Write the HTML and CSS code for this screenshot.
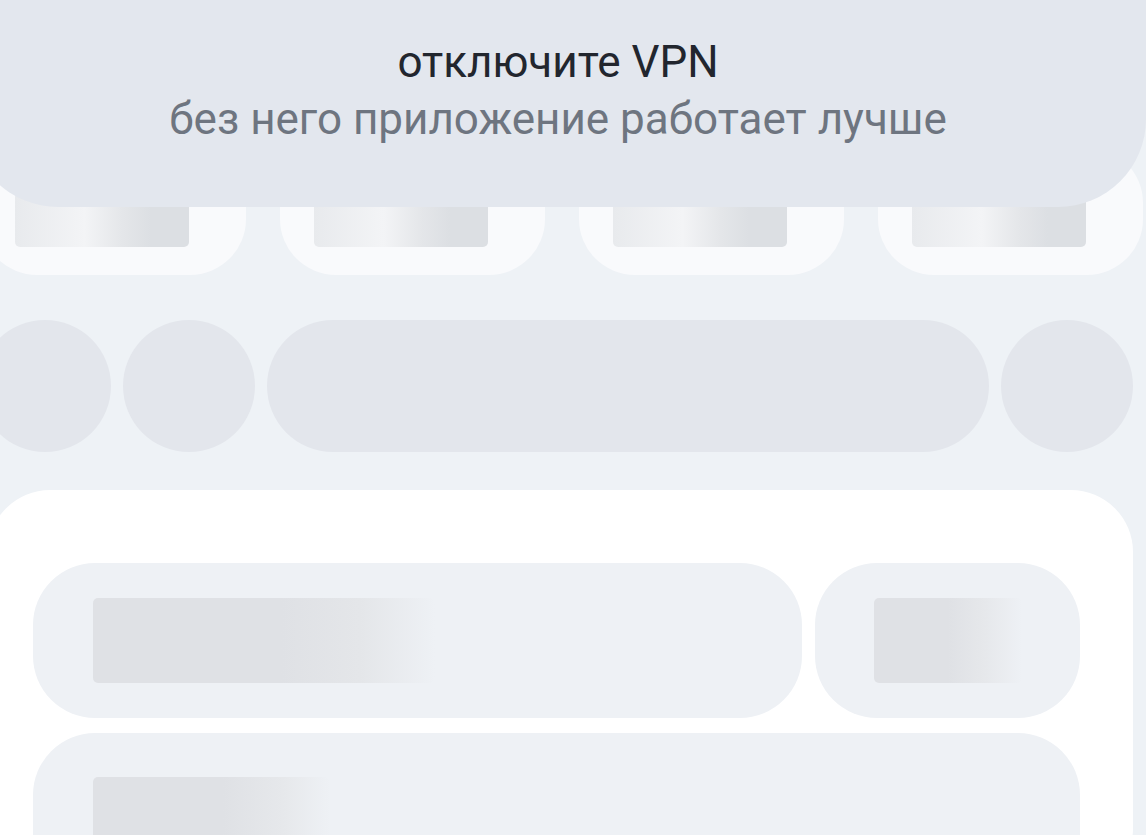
FILE: index.html
```html
<!DOCTYPE html>
<html lang="ru">
<head>
<meta charset="utf-8">
<title>VPN</title>
<link rel="stylesheet" href="styles.css">
</head>
<body>
<div class="screen">
  <div class="banner">
    <div class="banner-title">отключите VPN</div>
    <div class="banner-sub">без него приложение работает лучше</div>
  </div>
  <div class="cards">
    <div class="card"><div class="card-bar"></div></div>
    <div class="card"><div class="card-bar"></div></div>
    <div class="card"><div class="card-bar"></div></div>
    <div class="card"><div class="card-bar"></div></div>
  </div>
  <div class="chips">
    <div class="circle"></div>
    <div class="circle"></div>
    <div class="long-pill"></div>
    <div class="circle"></div>
  </div>
  <div class="panel">
    <div class="panel-row">
      <div class="pill pill-wide"><div class="bar bar-a"></div></div>
      <div class="pill pill-small"><div class="bar bar-b"></div></div>
    </div>
    <div class="pill pill-full"><div class="bar bar-c"></div></div>
  </div>
</div>
</body>
</html>
```

FILE: styles.css
```css
html, body {
  margin: 0;
  padding: 0;
  background: #eef2f6;
  overflow: hidden;
}

.screen {
  width: 1146px;
  height: 835px;
  overflow: hidden;
  font-family: Roboto, "Noto Sans", sans-serif;
}

.banner {
  position: relative;
  z-index: 2;
  margin-left: -30px;
  height: 207px;
  background: #e3e7ee;
  border-radius: 0 0 88px 88px;
  box-sizing: border-box;
  padding-top: 34px;
  text-align: center;
}

.banner-title {
  font-size: 44px;
  line-height: 56px;
  color: #22262e;
}

.banner-sub {
  font-size: 44px;
  line-height: 58px;
  color: #6e7580;
}

.cards {
  display: flex;
  gap: 34px;
  margin-left: -19px;
  margin-top: -60px;
}

.card {
  flex: 0 0 265px;
  height: 128px;
  background: #f9fafc;
  border-radius: 56px;
  box-sizing: border-box;
  padding: 32px 0 0 34px;
}

.card-bar {
  width: 174px;
  height: 68px;
  border-radius: 5px;
  background: linear-gradient(90deg, #e8eaed 0%, #f3f4f6 40%, #e4e6e9 62%, #dcdfe3 78%, #dcdfe3 100%);
}

.chips {
  display: flex;
  gap: 12px;
  margin-left: -21px;
  margin-top: 45px;
}

.circle {
  flex: 0 0 132px;
  height: 132px;
  border-radius: 50%;
  background: #e3e6ec;
}

.long-pill {
  flex: 0 0 722px;
  height: 132px;
  border-radius: 66px;
  background: #e3e6ec;
}

.panel {
  margin-top: 38px;
  margin-left: -12px;
  width: 1145px;
  height: 400px;
  background: #ffffff;
  border-radius: 62px;
  box-sizing: border-box;
  padding: 73px 0 0 45px;
}

.panel-row {
  display: flex;
  gap: 13px;
  margin-bottom: 15px;
}

.pill {
  background: #eef1f5;
  border-radius: 62px;
  box-sizing: border-box;
  padding-left: 60px;
}

.pill-wide {
  flex: 0 0 769px;
  height: 155px;
  padding-top: 35px;
}

.pill-small {
  flex: 0 0 265px;
  height: 155px;
  padding-top: 35px;
  padding-left: 59px;
}

.pill-full {
  width: 1047px;
  height: 200px;
  padding-top: 44px;
}

.bar {
  height: 85px;
  border-radius: 5px;
}

.bar-a {
  width: 342px;
  background: linear-gradient(90deg, #dfe1e5 0%, #dfe1e5 55%, #e4e6e9 78%, #eef1f5 100%);
}

.bar-b {
  width: 148px;
  background: linear-gradient(90deg, #dfe1e5 0%, #dfe1e5 50%, #e6e8eb 75%, #eef1f5 100%);
}

.bar-c {
  width: 237px;
  height: 90px;
  background: linear-gradient(90deg, #dfe1e5 0%, #dfe1e5 55%, #e6e8eb 80%, #eef1f5 100%);
}
```
